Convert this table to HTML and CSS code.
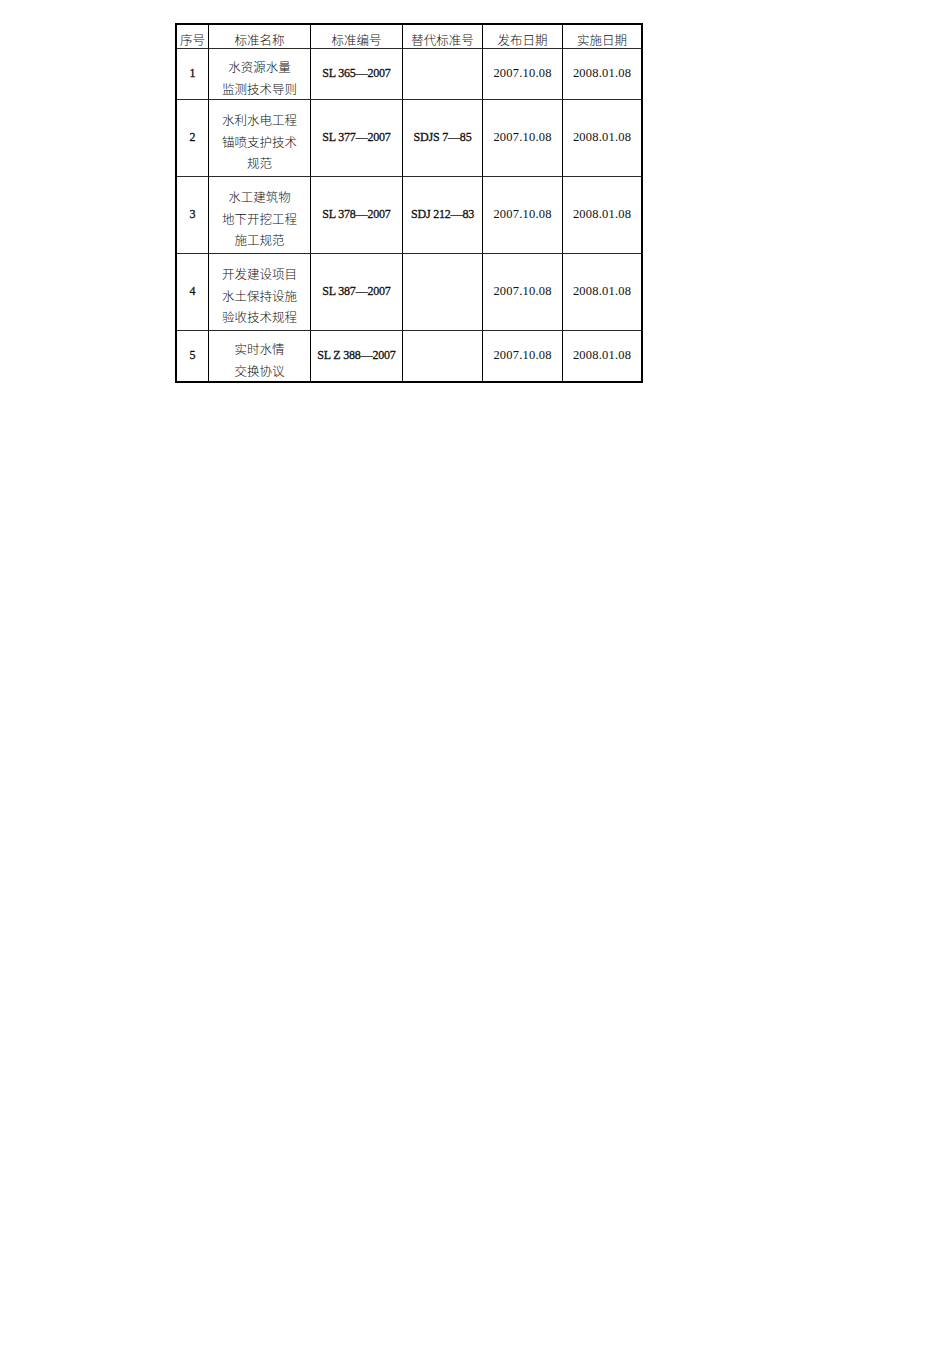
FILE: index.html
```html
<!DOCTYPE html>
<html lang="zh">
<head>
<meta charset="utf-8">
<title>标准目录</title>
<link rel="stylesheet" href="styles.css">
</head>
<body>
<div class="sheet">
  <div class="grid">
    <div class="cell head">序号</div>
    <div class="cell head">标准名称</div>
    <div class="cell head">标准编号</div>
    <div class="cell head">替代标准号</div>
    <div class="cell head">发布日期</div>
    <div class="cell head last">实施日期</div>

    <div class="cell num r2">1</div>
    <div class="cell name r2">水资源水量<br>监测技术导则</div>
    <div class="cell code r2">SL 365—2007</div>
    <div class="cell code r2"></div>
    <div class="cell date r2">2007.10.08</div>
    <div class="cell date r2 last">2008.01.08</div>

    <div class="cell num r3">2</div>
    <div class="cell name r3">水利水电工程<br>锚喷支护技术<br>规范</div>
    <div class="cell code r3">SL 377—2007</div>
    <div class="cell code r3">SDJS 7—85</div>
    <div class="cell date r3">2007.10.08</div>
    <div class="cell date r3 last">2008.01.08</div>

    <div class="cell num r3">3</div>
    <div class="cell name r3">水工建筑物<br>地下开挖工程<br>施工规范</div>
    <div class="cell code r3">SL 378—2007</div>
    <div class="cell code r3">SDJ 212—83</div>
    <div class="cell date r3">2007.10.08</div>
    <div class="cell date r3 last">2008.01.08</div>

    <div class="cell num r3">4</div>
    <div class="cell name r3">开发建设项目<br>水土保持设施<br>验收技术规程</div>
    <div class="cell code r3">SL 387—2007</div>
    <div class="cell code r3"></div>
    <div class="cell date r3">2007.10.08</div>
    <div class="cell date r3 last">2008.01.08</div>

    <div class="cell num r2 end">5</div>
    <div class="cell name r2 end">实时水情<br>交换协议</div>
    <div class="cell code r2 end">SL Z 388—2007</div>
    <div class="cell code r2 end"></div>
    <div class="cell date r2 end">2007.10.08</div>
    <div class="cell date r2 end last">2008.01.08</div>
  </div>
</div>
</body>
</html>
```
FILE: styles.css
```css
html, body {
  margin: 0;
  padding: 0;
  background: #fff;
}

.sheet {
  padding: 23px 0 0 175px;
}

.grid {
  display: grid;
  grid-template-columns: 32px 102px 92px 80px 80px 78px;
  grid-template-rows: 24px 51px 77px 77px 77px 50px;
  width: 464px;
  border: 2px solid #000;
  color: #111;
}

.cell {
  box-sizing: border-box;
  border-right: 1px solid #000;
  border-bottom: 1px solid #2a2a2a;
  display: flex;
  align-items: center;
  justify-content: center;
  text-align: center;
  font-family: "Noto Sans CJK SC", sans-serif;
  font-size: 12.5px;
  line-height: 21.5px;
  font-weight: 300;
}

.cell.last {
  border-right: none;
}

.cell.end {
  border-bottom: none;
}

.head {
  padding-top: 7px;
  line-height: 16px;
}

.name {
  padding-top: 7px;
}

.num {
  font-family: "Liberation Serif", serif;
  font-size: 12px;
  font-weight: 400;
  -webkit-text-stroke: 0.3px #111;
}

.code {
  font-family: "Liberation Serif", serif;
  font-size: 12px;
  font-weight: 400;
  letter-spacing: -0.2px;
  -webkit-text-stroke: 0.3px #111;
}

.date {
  font-family: "Liberation Serif", serif;
  font-size: 12.5px;
  font-weight: 400;
  letter-spacing: 0.2px;
}
```
